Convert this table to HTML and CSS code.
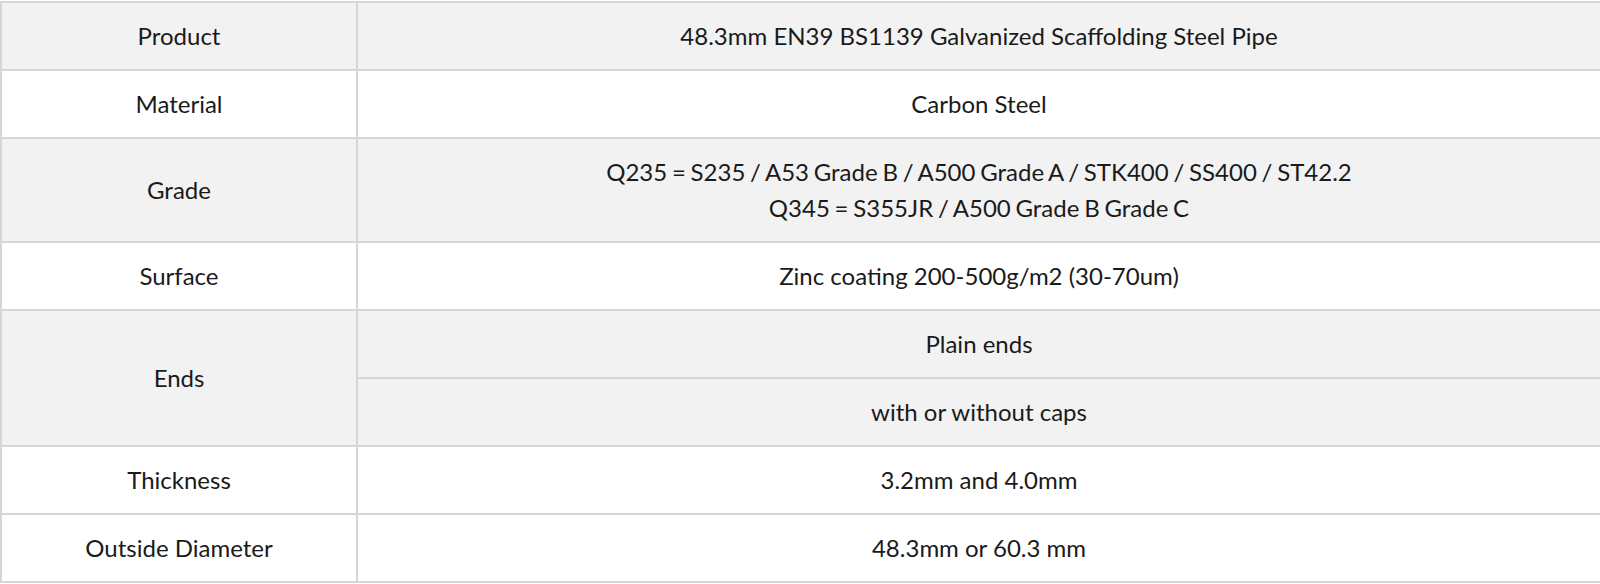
FILE: index.html
```html
<!DOCTYPE html>
<html lang="en">
<head>
<meta charset="utf-8">
<title>Scaffolding Steel Pipe Specification</title>
<link rel="stylesheet" href="styles.css">
</head>
<body>
<table class="spec">
  <tbody>
    <tr class="shade">
      <td class="label">Product</td>
      <td class="value">48.3mm EN39 BS1139 Galvanized Scaffolding Steel Pipe</td>
    </tr>
    <tr>
      <td class="label">Material</td>
      <td class="value">Carbon Steel</td>
    </tr>
    <tr class="shade">
      <td class="label">Grade</td>
      <td class="value grade">Q235 = S235 / A53 Grade B / A500 Grade A / STK400 / SS400 / ST42.2<br>Q345 = S355JR / A500 Grade B Grade C</td>
    </tr>
    <tr>
      <td class="label">Surface</td>
      <td class="value">Zinc coating 200-500g/m2 (30-70um)</td>
    </tr>
    <tr class="shade">
      <td class="label" rowspan="2">Ends</td>
      <td class="value">Plain ends</td>
    </tr>
    <tr class="shade">
      <td class="value">with or without caps</td>
    </tr>
    <tr>
      <td class="label">Thickness</td>
      <td class="value">3.2mm and 4.0mm</td>
    </tr>
    <tr>
      <td class="label">Outside Diameter</td>
      <td class="value">48.3mm or 60.3 mm</td>
    </tr>
  </tbody>
</table>
</body>
</html>
```

FILE: styles.css
```css
html, body {
  margin: 0;
  padding: 0;
  background: #ffffff;
}
body {
  padding-top: 1px;
  font-family: Lato, "Open Sans", "Liberation Sans", sans-serif;
  font-size: 24px;
  line-height: 36px;
  color: #1a1a1a;
}
.spec {
  width: 100%;
  border-collapse: collapse;
  border-spacing: 0;
  table-layout: fixed;
}
.spec td {
  border-top: 2px solid #d6d6d6;
  border-bottom: 2px solid #d6d6d6;
  border-left: 2px solid #d6d6d6;
  padding: 15px 10px;
  text-align: center;
  vertical-align: middle;
  background: #ffffff;
}
.spec .label {
  width: 334px;
}
.spec .grade {
  word-spacing: -1.4px;
}
.spec .shade td {
  background: #f2f2f2;
}
```
